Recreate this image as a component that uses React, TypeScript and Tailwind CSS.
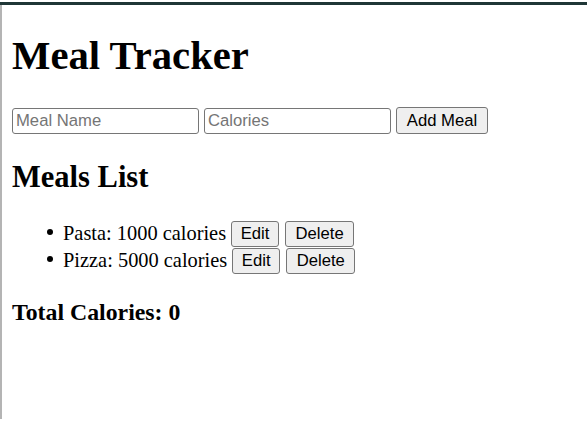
import React, { useState } from 'react'

interface Meal {
    name: string;
    calories: number;
}

const serif = "font-['Liberation_Serif','Times_New_Roman',serif]"
const sans = "font-['Liberation_Sans',Arial,sans-serif]"

function MealRow({ meal }: { meal: Meal }) {
    return (
        <li className='flex items-center h-[27px]'>
            <span className='w-[6px] h-[6px] rounded-full bg-black mr-[10px] -mt-[3px]'></span>
            <span className='text-[20.4px] leading-[23px] whitespace-nowrap'>{meal.name}: {meal.calories} calories</span>
            <button type='button' className={`${sans} ml-[5px] w-[48px] h-[26px] rounded-[3px] border border-[#767676] bg-[#efefef] text-[16.67px] leading-[normal] text-black`}>Edit</button>
            <button type='button' className={`${sans} ml-[6px] w-[69px] h-[26px] rounded-[3px] border border-[#767676] bg-[#efefef] text-[16.67px] leading-[normal] text-black`}>Delete</button>
        </li>
    )
}

export default function App() {
    const [meals] = useState<Array<Meal>>([
        { name: 'Pasta', calories: 1000 },
        { name: 'Pizza', calories: 5000 },
    ])

    return (
        <div className={`${serif} w-[587px] h-[439px] bg-white text-black pt-[2px]`}>
            {/* top frame line */}
            <div className='h-[3px] bg-[#1f3636]'></div>
            <div className='h-[414px] border-l-2 border-[#b4b4b4] pl-[10px] pt-[28px]'>
                <h1 className='text-[40.7px] leading-[46px] font-bold'>Meal Tracker</h1>

                <div className='mt-[28px] flex items-center'>
                    <input
                        type='text'
                        placeholder='Meal Name'
                        className={`${sans} w-[187px] h-[26px] px-[3px] rounded-[3px] border border-[#767676] text-[16.67px] placeholder:text-[#757575] outline-none`}
                    />
                    <input
                        type='number'
                        placeholder='Calories'
                        className={`${sans} ml-[5px] w-[187px] h-[26px] px-[3px] rounded-[3px] border border-[#767676] text-[16.67px] placeholder:text-[#757575] outline-none`}
                    />
                    <button type='button' className={`${sans} ml-[5px] w-[92px] h-[27px] rounded-[3px] border border-[#767676] bg-[#efefef] text-[16.67px] leading-[normal]`}>
                        Add Meal
                    </button>
                </div>

                <h2 className='mt-[26px] text-[30.5px] leading-[35px] font-bold'>Meals List</h2>

                <ul className='mt-[25px] pl-[35px]'>
                    {meals.map((meal) => (
                        <MealRow key={meal.name} meal={meal} />
                    ))}
                </ul>

                <h3 className='mt-[25px] text-[23.8px] leading-[27px] font-bold'>Total Calories: 0</h3>
            </div>
        </div>
    )
}
